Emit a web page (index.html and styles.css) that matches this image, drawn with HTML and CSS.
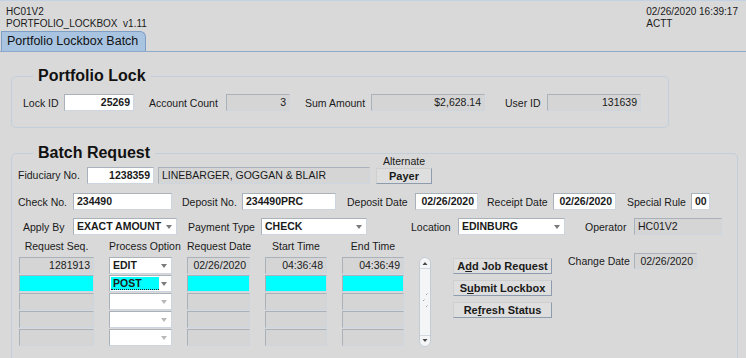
FILE: index.html
```html
<!DOCTYPE html>
<html lang="en">

<head>
    <meta charset="UTF-8">
    <meta name="viewport" content="width=device-width, initial-scale=1.0">
    <title>Portfolio Lockbox Batch</title>
    <link rel="stylesheet" href="styles.css">
</head>

<body>
    <div class="topbar">
        <div class="app-info">HC01V2<br>PORTFOLIO_LOCKBOX&nbsp; v1.11</div>
        <div class="session-info">02/26/2020 16:39:17<br>ACTT</div>
    </div>
    <div class="tabbar">
        <div class="tab">Portfolio Lockbox Batch</div>
    </div>

    <!-- Portfolio Lock -->
    <fieldset class="frame frame-lock">
        <legend>Portfolio Lock</legend>
        <div class="row">
            <span class="lbl w41">Lock ID</span>
            <div class="box edit num w70">25269</div>
            <span class="lbl ml15 w77">Account Count</span>
            <div class="box ro num w64">3</div>
            <span class="lbl ml15 w66">Sum Amount</span>
            <div class="box ro num w114">$2,628.14</div>
            <span class="lbl ml20 w42">User ID</span>
            <div class="box ro num w94">131639</div>
        </div>
    </fieldset>

    <!-- Batch Request -->
    <fieldset class="frame frame-batch">
        <legend>Batch Request</legend>

        <div class="row row-fid">
            <span class="lbl w69">Fiduciary No.</span>
            <div class="box edit num w67">1238359</div>
            <div class="box ro ml4 w212">LINEBARGER, GOGGAN &amp; BLAIR</div>
            <div class="payer ml6">
                <span class="payer-cap">Alternate</span>
                <div class="btn">Payer</div>
            </div>
        </div>

        <div class="row row-check">
            <span class="lbl w55">Check No.</span>
            <div class="box edit w99">234490</div>
            <span class="lbl ml10 w60">Deposit No.</span>
            <div class="box edit w94">234490PRC</div>
            <span class="lbl ml11 w68">Deposit Date</span>
            <div class="box edit num w63">02/26/2020</div>
            <span class="lbl ml9 w66">Receipt Date</span>
            <div class="box edit num w63">02/26/2020</div>
            <span class="lbl ml11 w64">Special Rule</span>
            <div class="box edit w19">00</div>
        </div>

        <div class="row row-apply">
            <span class="lbl w50">Apply By</span>
            <div class="box edit select w104">EXACT AMOUNT</div>
            <span class="lbl ml11 w73">Payment Type</span>
            <div class="box edit select w106">CHECK</div>
            <span class="lbl ml44 w47">Location</span>
            <div class="box edit select w107">EDINBURG</div>
            <span class="lbl ml20 w49">Operator</span>
            <div class="box ro w88">HC01V2</div>
        </div>

        <div class="row row-jobs">
            <div class="jobs">
                <div class="jobs-grid jobs-head">
                    <span>Request Seq.</span>
                    <span>Process Option</span>
                    <span>Request Date</span>
                    <span>Start Time</span>
                    <span>End Time</span>
                </div>
                <div class="jobs-grid jobs-body">
                    <div class="box ro num">1281913</div>
                    <div class="box edit select">EDIT</div>
                    <div class="box ro num">02/26/2020</div>
                    <div class="box ro num">04:36:48</div>
                    <div class="box ro num">04:36:49</div>

                    <div class="box ro cur"></div>
                    <div class="box edit select"><span class="focus">POST</span></div>
                    <div class="box ro cur"></div>
                    <div class="box ro cur"></div>
                    <div class="box ro cur"></div>

                    <div class="box ro"></div>
                    <div class="box edit select empty"></div>
                    <div class="box ro"></div>
                    <div class="box ro"></div>
                    <div class="box ro"></div>

                    <div class="box ro"></div>
                    <div class="box edit select empty"></div>
                    <div class="box ro"></div>
                    <div class="box ro"></div>
                    <div class="box ro"></div>

                    <div class="box ro"></div>
                    <div class="box edit select empty"></div>
                    <div class="box ro"></div>
                    <div class="box ro"></div>
                    <div class="box ro"></div>
                </div>
            </div>

            <svg class="scroll" width="12" height="90" viewBox="0 0 12 90">
                <rect x="0.5" y="0.5" width="11" height="89" rx="5.5" fill="#f3f5f7" stroke="#c3cbd5" />
                <line x1="1" y1="11.5" x2="11" y2="11.5" stroke="#d2d8df" />
                <line x1="1" y1="78.5" x2="11" y2="78.5" stroke="#d2d8df" />
                <path d="M3.5 8 L6 5 L8.5 8 Z" fill="#4a4a4a" />
                <path d="M3.5 82 L6 85 L8.5 82 Z" fill="#4a4a4a" />
                <path d="M7 38 L8.5 36.5 M4 44 L5.5 42.5 M7 50 L8.5 48.5" stroke="#9aa3ad" stroke-width="1" />
            </svg>

            <div class="actions">
                <div class="btn">A<u>d</u>d Job Request</div>
                <div class="btn">S<u>u</u>bmit Lockbox</div>
                <div class="btn">Re<u>f</u>resh Status</div>
            </div>

            <div class="change">
                <span class="lbl w66">Change Date</span>
                <div class="box ro num w63 h16">02/26/2020</div>
            </div>
        </div>
    </fieldset>
</body>

</html>
```

FILE: styles.css
```css
* {
    margin: 0;
    padding: 0;
    box-sizing: border-box;
}

body {
    width: 746px;
    height: 358px;
    overflow: hidden;
    background-color: #d9d9d9;
    border-top: 1px solid #c2d2e4;
    font-family: "Liberation Sans", Arial, sans-serif;
    font-size: 10.5px;
    color: #1a1a1a;
}

/* header */
.topbar {
    height: 30px;
    display: flex;
    justify-content: space-between;
    padding: 5px 8px 0 6px;
    font-size: 10px;
    line-height: 12px;
}

.tabbar {
    height: 21px;
    border-bottom: 1px solid #8eaacb;
}

.tab {
    width: 145px;
    height: 20px;
    margin-left: 1px;
    padding-left: 5px;
    border: 1px solid #7e9ec4;
    border-bottom: 0;
    border-top-right-radius: 6px;
    background-color: #a9c4e1;
    font-size: 12.5px;
    line-height: 19px;
    color: #111;
}

/* frames */
.frame {
    margin-left: 11px;
    border: 1px solid #c3cedb;
    border-radius: 5px;
    min-width: 0;
}

.frame legend {
    margin-left: 10px;
    padding: 0 5px;
    font-size: 16px;
    font-weight: bold;
    line-height: 18px;
    color: #111;
}

.frame-lock {
    width: 658px;
    margin-top: 15px;
    padding: 0 0 16px 11px;
}

.frame-lock .row {
    margin-top: 9px;
}

.frame-batch {
    width: 727px;
    height: 230px;
    margin-top: 16px;
    padding: 0 0 0 6px;
}

.frame-batch legend {
    margin-left: 15px;
}

.row {
    display: flex;
    align-items: center;
}

.row-fid {
    margin-top: -7px;
    align-items: flex-end;
}

.row-fid .lbl {
    line-height: 17px;
}

.row-check {
    margin-top: 9px;
}

.row-apply {
    margin-top: 8px;
    padding-left: 5px;
}

.row-jobs {
    margin-top: 5px;
    align-items: flex-start;
}

/* labels and fields */
.lbl {
    flex: none;
    white-space: nowrap;
}

.box {
    flex: none;
    position: relative;
    height: 17px;
    padding: 0 3px;
    border: 1px solid;
    border-color: #a9b1bb #cdd5de #cdd5de #a9b1bb;
    line-height: 15px;
    white-space: nowrap;
    overflow: hidden;
}

.box.edit {
    background-color: #fff;
    font-weight: bold;
}

.box.ro {
    background-color: #d5d5d5;
}

.box.cur {
    background-color: #00ffff;
}

.box.num {
    text-align: right;
}

.box.h16 {
    height: 16px;
    line-height: 14px;
}

.select {
    padding-right: 14px;
}

.select::after {
    content: "";
    position: absolute;
    right: 4px;
    top: 6px;
    border-left: 3.5px solid transparent;
    border-right: 3.5px solid transparent;
    border-top: 4px solid #7a7a7a;
}

.select.empty::after {
    border-top-color: #b9b9b9;
}

.focus {
    display: block;
    width: 48px;
    height: 13px;
    margin: 1px 0 0 -2px;
    padding-left: 2px;
    background-color: #00ffff;
    border-bottom: 1px dotted #222;
    line-height: 13px;
}

/* buttons */
.btn {
    height: 16px;
    border: 1px solid;
    border-color: #cfcfcf #8e9caf #8e9caf #cfcfcf;
    background-color: #dedede;
    font-size: 11px;
    font-weight: bold;
    line-height: 14px;
    text-align: center;
    white-space: nowrap;
}

.payer {
    width: 56px;
    display: flex;
    flex-direction: column;
}

.payer-cap {
    line-height: 12px;
    margin-bottom: 1px;
    text-align: center;
}

/* job grid */
.jobs {
    margin-left: 1px;
}

.jobs-grid {
    display: grid;
    grid-template-columns: 75px 63px 63px 62px 62px;
    column-gap: 15px;
}

.jobs-head span {
    line-height: 12px;
    text-align: center;
    white-space: nowrap;
}

.jobs-body {
    margin-top: 5px;
    row-gap: 1px;
}

.jobs-body .box.edit {
    padding-left: 3px;
}

.scroll {
    flex: none;
    margin: 17px 0 0 15px;
}

.actions {
    width: 99px;
    margin: 18px 0 0 22px;
    display: flex;
    flex-direction: column;
    gap: 6px;
}

.change {
    margin: 13px 0 0 16px;
    display: flex;
    align-items: center;
}

/* widths */
.w19 { width: 19px; }
.w41 { width: 41px; }
.w42 { width: 42px; }
.w47 { width: 47px; }
.w49 { width: 49px; }
.w50 { width: 50px; }
.w55 { width: 55px; }
.w60 { width: 60px; }
.w63 { width: 63px; }
.w64 { width: 64px; }
.w66 { width: 66px; }
.w67 { width: 67px; }
.w68 { width: 68px; }
.w69 { width: 69px; }
.w70 { width: 70px; }
.w73 { width: 73px; }
.w77 { width: 77px; }
.w88 { width: 88px; }
.w94 { width: 94px; }
.w99 { width: 99px; }
.w104 { width: 104px; }
.w106 { width: 106px; }
.w107 { width: 107px; }
.w114 { width: 114px; }
.w212 { width: 212px; }

/* gaps */
.ml4 { margin-left: 4px; }
.ml6 { margin-left: 6px; }
.ml9 { margin-left: 9px; }
.ml10 { margin-left: 10px; }
.ml11 { margin-left: 11px; }
.ml15 { margin-left: 15px; }
.ml20 { margin-left: 20px; }
.ml44 { margin-left: 44px; }
```
